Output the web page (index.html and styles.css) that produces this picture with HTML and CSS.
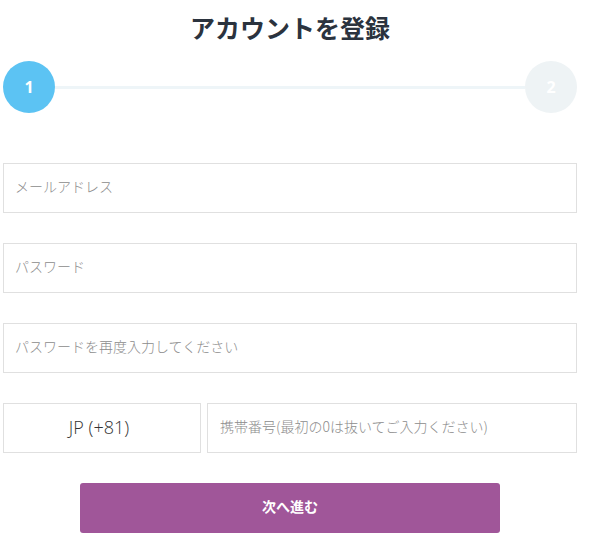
FILE: index.html
```html
<!DOCTYPE html>
<html lang="ja">
<head>
<meta charset="utf-8">
<link rel="stylesheet" href="styles.css">
</head>
<body>
<div class="wrap">
  <h1 class="title">アカウントを登録</h1>
  <div class="steps">
    <div class="step active">1</div>
    <div class="line"></div>
    <div class="step">2</div>
  </div>
  <form class="form">
    <div class="field"><input class="input" type="text" placeholder="メールアドレス"></div>
    <div class="field"><input class="input" type="password" placeholder="パスワード"></div>
    <div class="field"><input class="input" type="password" placeholder="パスワードを再度入力してください"></div>
    <div class="field row">
      <div class="country">JP (+81)</div>
      <input class="input phone" type="text" placeholder="携帯番号(最初の0は抜いてご入力ください)">
    </div>
    <div class="actions"><button class="btn" type="button">次へ進む</button></div>
  </form>
</div>
</body>
</html>
```
FILE: styles.css
```css
html, body { margin: 0; padding: 0; background: #fff; }
body { font-family: "Noto Sans CJK JP", "Noto Sans", sans-serif; }
.wrap { width: 574px; margin-left: 3px; }
.title {
  margin: 0;
  padding-top: 7px;
  height: 40px;
  text-align: center;
  font-size: 25px;
  line-height: 40px;
  font-weight: 700;
  color: #2b333e;
}
.steps {
  display: flex;
  align-items: center;
  margin-top: 14px;
  height: 52px;
}
.step {
  width: 52px; height: 52px; border-radius: 50%;
  background: #eef3f5; color: #fff;
  display: flex; align-items: center; justify-content: center;
  font-family: "Open Sans", "Noto Sans", sans-serif;
  font-weight: 700; font-size: 16px;
  flex: none;
}
.step.active { background: #5cc3f3; }
.line { flex: 1; height: 3px; background: #eef5f8; }
.form { margin-top: 50px; }
.field { height: 50px; margin-bottom: 30px; }
.input {
  box-sizing: border-box; width: 100%; height: 50px;
  border: 1px solid #e0e0e0; border-radius: 0;
  padding: 0 11px 4px; margin: 0;
  font-family: "Noto Sans CJK JP", sans-serif; font-size: 14px; font-weight: 300;
  color: #333; outline: none; background: #fff;
}
.input::placeholder { color: #8c8c8c; }
.row { display: flex; gap: 6px; }
.country {
  box-sizing: border-box; width: 198px; height: 50px; flex: none;
  border: 1px solid #e0e0e0;
  display: flex; align-items: center; justify-content: center;
  padding-right: 6px; padding-bottom: 2px;
  font-family: "Open Sans", sans-serif; font-size: 18px; font-weight: 300; color: #333;
}
.phone { flex: 1; width: auto; padding-left: 12px; font-size: 14px; }
.actions { display: flex; justify-content: center; }
.btn {
  width: 420px; height: 50px; border: none; border-radius: 3px;
  padding: 0 0 4px;
  background: #a05699; color: #fff;
  font-family: "Noto Sans CJK JP", sans-serif; font-weight: 700; font-size: 14px;
  cursor: pointer;
}
```
